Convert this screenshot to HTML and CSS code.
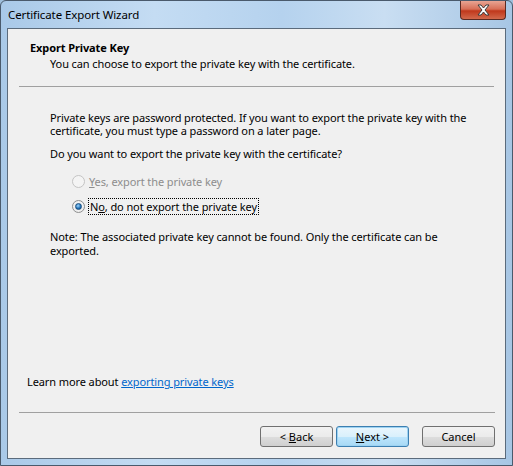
FILE: index.html
```html
<!DOCTYPE html>
<html lang="en">
<head>
    <meta charset="UTF-8">
    <title>Certificate Export Wizard</title>
    <link rel="stylesheet" href="styles.css">
</head>
<body>
    <div class="window">
        <div class="titlebar">
            <span class="title">Certificate Export Wizard</span>
            <button class="close-btn">
                <svg width="15" height="12" viewBox="0 0 15 12">
                    <path d="M2 1h3l2.5 3L10 1h3l-4 5 4 5h-3L7.5 8 5 11H2l4-5z" fill="#fff" stroke="#3a3a3a" stroke-width="1"/>
                </svg>
            </button>
        </div>
        <div class="client">
            <div class="header">
                <div class="header-title">Export Private Key</div>
                <div class="header-sub">You can choose to export the private key with the certificate.</div>
            </div>
            <div class="body">
                <p class="para">Private keys are password protected. If you want to export the private key with the certificate, you must type a password on a later page.</p>
                <p class="para question">Do you want to export the private key with the certificate?</p>
                <div class="options">
                    <label class="option disabled"><span class="radio"></span><span><u>Y</u>es, export the private key</span></label>
                    <label class="option"><span class="radio checked"></span><span class="focus">N<u>o</u>, do not export the private key</span></label>
                </div>
                <p class="para note">Note: The associated private key cannot be found. Only the certificate can be exported.</p>
            </div>
            <div class="learn">Learn more about <a href="#">exporting private keys</a></div>
            <div class="footer">
                <button class="btn">&lt; <u>B</u>ack</button>
                <button class="btn default"><u>N</u>ext &gt;</button>
                <button class="btn cancel">Cancel</button>
            </div>
        </div>
    </div>
</body>
</html>
```

FILE: styles.css
```css
html, body {
    margin: 0;
    padding: 0;
}
body {
    width: 513px;
    height: 466px;
    background-color: #9fbfdc;
    font-family: "Noto Sans", "Open Sans", sans-serif;
    font-size: 11px;
    letter-spacing: -0.1px;
    color: #000;
}
.window {
    box-sizing: border-box;
    width: 513px;
    height: 466px;
    display: flex;
    flex-direction: column;
    border: 1px solid #4a5a6c;
    border-radius: 6px 6px 0 0;
    background: linear-gradient(to right, #a9c9e8 0%, #c4dcf3 30%, #b5d2ee 55%, #c9def2 75%, #a7c6e4 100%);
}
.titlebar {
    height: 27px;
    display: flex;
    align-items: flex-start;
    justify-content: space-between;
}
.title {
    margin: 6px 0 0 7px;
    font-size: 11.5px;
    color: #000;
}
.close-btn {
    width: 46px;
    height: 19px;
    margin-right: 6px;
    border: 1px solid #5a2a22;
    border-top: none;
    border-radius: 0 0 4px 4px;
    background: linear-gradient(to bottom, #e8a493 0%, #d76f57 45%, #c0381c 55%, #d2694c 100%);
    display: flex;
    align-items: center;
    justify-content: center;
    padding: 0;
}
.client {
    flex: 1;
    margin: 0 6px 6px 6px;
    border: 1px solid #5b6b7c;
    background-color: #f0f0f0;
    display: flex;
    flex-direction: column;
}
.header {
    margin: 0 11px;
    padding: 11px 0 15px 11px;
    border-bottom: 1px solid #a0a0a0;
}
.header-title {
    font-weight: bold;
    line-height: 16px;
}
.header-sub {
    padding-left: 20px;
    line-height: 15px;
}
.body {
    padding: 24px 30px 0 42px;
}
.para {
    margin: 0 0 10px 0;
    line-height: 13px;
}
.options {
    display: flex;
    flex-direction: column;
    gap: 7px;
    margin: 12px 0 15px 22px;
}
.option {
    display: flex;
    align-items: center;
    gap: 4px;
    height: 18px;
}
.option.disabled {
    color: #8d8d8d;
}
.radio {
    box-sizing: border-box;
    width: 13px;
    height: 13px;
    border-radius: 50%;
    border: 1px solid #8e8f8f;
    background: radial-gradient(circle at 50% 40%, #fdfdfd 0%, #e6e6e6 100%);
    display: flex;
    align-items: center;
    justify-content: center;
}
.option.disabled .radio {
    border-color: #c4c4c4;
    background: #f4f4f4;
}
.radio.checked::after {
    content: "";
    width: 5px;
    height: 5px;
    border-radius: 50%;
    background: radial-gradient(circle at 40% 35%, #9ed6ff 0%, #1f6fb4 60%, #0d3f7a 100%);
    border: 1px solid #1a4f80;
}
.focus {
    outline: 1px dotted #000;
    outline-offset: 0;
    padding: 0 1px;
}
.note {
    margin: 0;
    line-height: 14px;
}
.learn {
    margin-top: auto;
    padding-left: 19px;
    line-height: 14px;
}
.learn a {
    color: #0066cc;
}
.footer {
    margin: 23px 10px 0 11px;
    padding: 13px 0 11px 0;
    border-top: 1px solid #a0a0a0;
    display: flex;
    justify-content: flex-end;
}
.btn {
    box-sizing: border-box;
    width: 73px;
    height: 21px;
    margin-left: 3px;
    border: 1px solid #707070;
    border-radius: 3px;
    background: linear-gradient(to bottom, #f2f2f2 0%, #ebebeb 50%, #dddddd 51%, #cfcfcf 100%);
    font-family: inherit;
    font-size: 11px;
    color: #000;
    padding: 0;
}
.btn.default {
    border-color: #3c7fb1;
    background: linear-gradient(to bottom, #eaf6fd 0%, #d9f0fc 50%, #bee6fd 51%, #a7d9f5 100%);
    box-shadow: inset 0 0 0 1px #9ed3f2;
}
.btn.cancel {
    margin-left: 13px;
}
```
